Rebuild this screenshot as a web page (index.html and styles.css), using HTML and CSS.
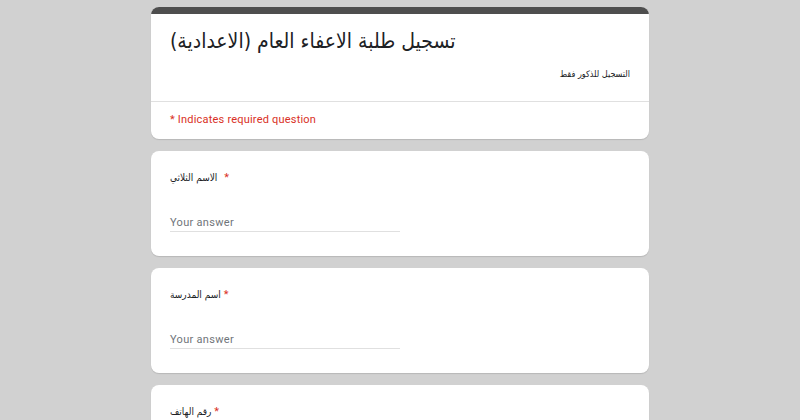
FILE: index.html
```html
<!DOCTYPE html>
<html>
<head>
<meta charset="utf-8">
<link rel="stylesheet" href="styles.css">
</head>
<body>
<div class="page">
  <div class="card header-card">
    <div class="topbar"></div>
    <div class="head">
      <div class="title">تسجيل طلبة الاعفاء العام (الاعدادية)</div>
      <div class="desc">التسجيل للذكور فقط</div>
    </div>
    <div class="req">* Indicates required question</div>
  </div>
  <div class="card q">
    <div class="label">الاسم الثلاثي <span class="star">*</span></div>
    <div class="answer">Your answer</div>
  </div>
  <div class="card q">
    <div class="label">اسم المدرسة <span class="star tight">*</span></div>
    <div class="answer">Your answer</div>
  </div>
  <div class="card q">
    <div class="label">رقم الهاتف <span class="star tight">*</span></div>
    <div class="answer">Your answer</div>
  </div>
</div>
</body>
</html>
```

FILE: styles.css
```css
html, body {
  margin: 0;
  padding: 0;
  background: #d1d1d1;
  font-family: "DejaVu Sans Condensed", "DejaVu Sans", sans-serif;
  overflow: hidden;
  height: 420px;
}
.page {
  width: 498px;
  margin: 0 auto;
  padding-top: 7px;
  display: flex;
  flex-direction: column;
  gap: 12px;
}
.card {
  background: #fff;
  border-radius: 8px;
  box-shadow: 0 1px 1px rgba(0,0,0,0.12);
  overflow: hidden;
}
.topbar {
  height: 7px;
  background: #4e4e4e;
}
.head {
  padding: 12px 19px 0 19px;
  height: 75px;
  border-bottom: 1px solid #e0e0e0;
}
.title {
  font-size: 21px;
  line-height: 30px;
  color: #202124;
  text-align: left;
}
.desc {
  direction: rtl;
  text-align: right;
  font-size: 9px;
  line-height: 12px;
  color: #202124;
  margin-top: 12px;
}
.req {
  font-family: Roboto, "Liberation Sans", sans-serif;
  font-size: 11px;
  letter-spacing: 0.2px;
  color: #d93025;
  padding: 11px 19px 12px;
  line-height: 14px;
}
.q {
  height: 105px;
  padding: 20px 19px 0;
  box-sizing: border-box;
}
.label {
  font-size: 10px;
  color: #202124;
  line-height: 14px;
}
.star {
  color: #d93025;
  font-family: Roboto, sans-serif;
  font-size: 11px;
  margin-left: 4px;
}
.star.tight {
  margin-left: 0;
}
.answer {
  margin-top: 31px;
  width: 230px;
  font-family: Roboto, sans-serif;
  font-size: 11px;
  letter-spacing: 0.3px;
  color: #70757a;
  line-height: 14px;
  padding-bottom: 1px;
  border-bottom: 1px solid #e0e0e0;
}
```
